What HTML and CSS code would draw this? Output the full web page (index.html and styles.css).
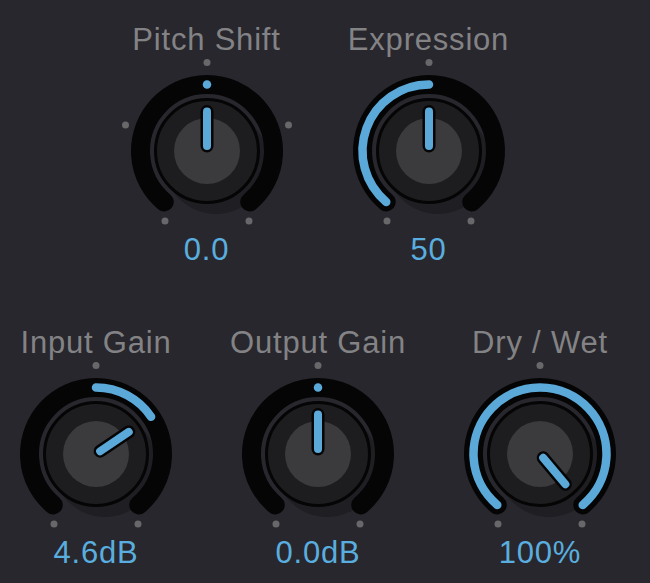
FILE: index.html
```html
<!DOCTYPE html>
<html>
<head>
<meta charset="utf-8">
<link rel="stylesheet" href="styles.css">
</head>
<body>
<div class="panel">
  <div class="row row-top">
    <div class="knob">
      <div class="label">Pitch Shift</div>
      <svg class="dial" viewBox="0 0 190 174">
        <circle class="tick" cx="95" cy="4.5" r="3.5"/>
        <circle class="tick" cx="13.5" cy="67" r="3.5"/>
        <circle class="tick" cx="176.5" cy="67" r="3.5"/>
        <circle class="tick" cx="53" cy="163" r="3.5"/>
        <circle class="tick" cx="137" cy="163" r="3.5"/>
        <circle class="shadow" cx="104" cy="104" r="52"/>
        <path class="track" d="M52.25 143.94 A66.5 66.5 0 1 1 137.75 143.94"/>
        <circle class="dot" cx="95" cy="26.5" r="4.25"/>
        <circle class="body" cx="95" cy="93" r="51.5"/>
        <circle class="face" cx="95" cy="93" r="33"/>
        <line class="ind-o" x1="95" y1="88" x2="95" y2="53.5"/>
        <line class="ind" x1="95" y1="88" x2="95" y2="53.5"/>
      </svg>
      <div class="value">0.0</div>
    </div>
    <div class="knob">
      <div class="label">Expression</div>
      <svg class="dial" viewBox="0 0 190 174">
        <circle class="tick" cx="95" cy="4.5" r="3.5"/>
        <circle class="tick" cx="53" cy="163" r="3.5"/>
        <circle class="tick" cx="137" cy="163" r="3.5"/>
        <circle class="shadow" cx="104" cy="104" r="52"/>
        <path class="track" d="M52.25 143.94 A66.5 66.5 0 1 1 137.75 143.94"/>
        <path class="arc" d="M52.25 143.94 A66.5 66.5 0 0 1 95 26.5"/>
        <circle class="body" cx="95" cy="93" r="51.5"/>
        <circle class="face" cx="95" cy="93" r="33"/>
        <line class="ind-o" x1="95" y1="88" x2="95" y2="53.5"/>
        <line class="ind" x1="95" y1="88" x2="95" y2="53.5"/>
      </svg>
      <div class="value">50</div>
    </div>
  </div>
  <div class="row row-bottom">
    <div class="knob">
      <div class="label">Input Gain</div>
      <svg class="dial" viewBox="0 0 190 174">
        <circle class="tick" cx="95" cy="4.5" r="3.5"/>
        <circle class="tick" cx="53" cy="163" r="3.5"/>
        <circle class="tick" cx="137" cy="163" r="3.5"/>
        <circle class="shadow" cx="104" cy="104" r="52"/>
        <path class="track" d="M52.25 143.94 A66.5 66.5 0 1 1 137.75 143.94"/>
        <path class="arc" d="M95 26.5 A66.5 66.5 0 0 1 150.13 55.81"/>
        <circle class="body" cx="95" cy="93" r="51.5"/>
        <circle class="face" cx="95" cy="93" r="33"/>
        <line class="ind-o" x1="99.15" y1="90.2" x2="127.75" y2="70.91"/>
        <line class="ind" x1="99.15" y1="90.2" x2="127.75" y2="70.91"/>
      </svg>
      <div class="value">4.6dB</div>
    </div>
    <div class="knob">
      <div class="label">Output Gain</div>
      <svg class="dial" viewBox="0 0 190 174">
        <circle class="tick" cx="95" cy="4.5" r="3.5"/>
        <circle class="tick" cx="53" cy="163" r="3.5"/>
        <circle class="tick" cx="137" cy="163" r="3.5"/>
        <circle class="shadow" cx="104" cy="104" r="52"/>
        <path class="track" d="M52.25 143.94 A66.5 66.5 0 1 1 137.75 143.94"/>
        <circle class="dot" cx="95" cy="26.5" r="4.25"/>
        <circle class="body" cx="95" cy="93" r="51.5"/>
        <circle class="face" cx="95" cy="93" r="33"/>
        <line class="ind-o" x1="95" y1="88" x2="95" y2="53.5"/>
        <line class="ind" x1="95" y1="88" x2="95" y2="53.5"/>
      </svg>
      <div class="value">0.0dB</div>
    </div>
    <div class="knob">
      <div class="label">Dry / Wet</div>
      <svg class="dial" viewBox="0 0 190 174">
        <circle class="tick" cx="95" cy="4.5" r="3.5"/>
        <circle class="tick" cx="53" cy="163" r="3.5"/>
        <circle class="tick" cx="137" cy="163" r="3.5"/>
        <circle class="shadow" cx="104" cy="104" r="52"/>
        <path class="track" d="M52.25 143.94 A66.5 66.5 0 1 1 137.75 143.94"/>
        <path class="arc" d="M52.25 143.94 A66.5 66.5 0 1 1 137.75 143.94"/>
        <circle class="body" cx="95" cy="93" r="51.5"/>
        <circle class="face" cx="95" cy="93" r="33"/>
        <line class="ind-o" x1="98.21" y1="96.83" x2="120.39" y2="123.26"/>
        <line class="ind" x1="98.21" y1="96.83" x2="120.39" y2="123.26"/>
      </svg>
      <div class="value">100%</div>
    </div>
  </div>
</div>
</body>
</html>
```
FILE: styles.css
```css
html, body {
  margin: 0;
  background: #28272d;
}
body {
  font-family: "Liberation Sans", Arial, sans-serif;
  width: 650px;
  height: 583px;
  overflow: hidden;
}
.panel {
  display: flex;
  flex-direction: column;
  gap: 56.5px;
  padding-top: 22px;
}
.row {
  display: flex;
  gap: 32px;
}
.row-top {
  padding-left: 111.5px;
}
.row-bottom {
  padding-left: 1px;
}
.knob {
  width: 190px;
  display: flex;
  flex-direction: column;
  align-items: center;
}
.label,
.value {
  font-size: 31px;
  line-height: 36px;
  letter-spacing: 0.8px;
  white-space: nowrap;
}
.label {
  color: #838386;
}
.value {
  color: #5aaedf;
}
.dial {
  display: block;
  width: 190px;
  height: 174px;
  overflow: visible;
}
.tick {
  fill: #68686b;
}
.shadow {
  fill: #1f1e23;
}
.track {
  fill: none;
  stroke: #050506;
  stroke-width: 19;
  stroke-linecap: round;
}
.arc {
  fill: none;
  stroke: #5ba9d8;
  stroke-width: 8.5;
  stroke-linecap: round;
}
.dot {
  fill: #5ba9d8;
}
.body {
  fill: #1d1d20;
  stroke: #050506;
  stroke-width: 3;
}
.face {
  fill: #3b3b3e;
}
.ind-o {
  stroke: #050506;
  stroke-width: 13;
  stroke-linecap: round;
}
.ind {
  stroke: #5ba9d8;
  stroke-width: 8;
  stroke-linecap: round;
}
```
